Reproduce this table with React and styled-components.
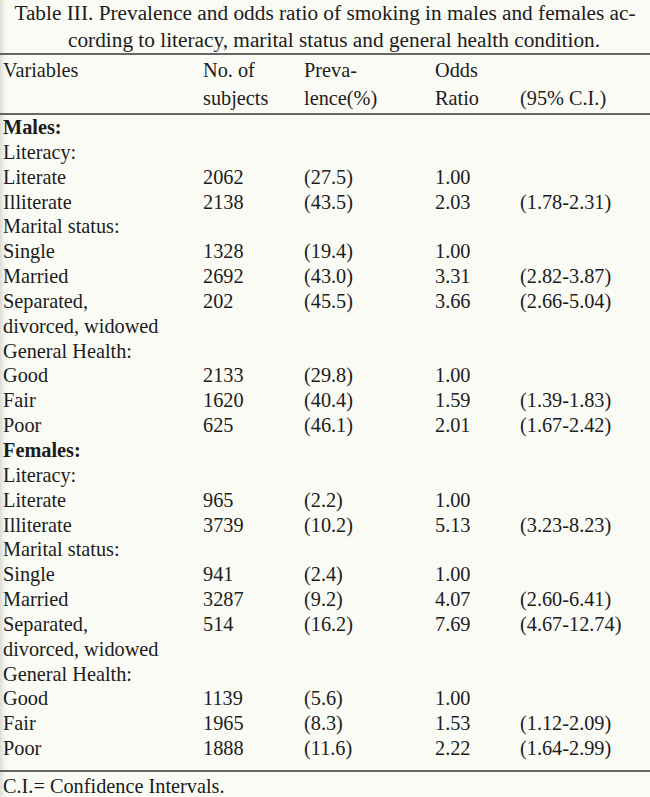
import React from "react";
import styled, { createGlobalStyle } from "styled-components";

const GlobalStyle = createGlobalStyle`
  html, body {
    margin: 0;
    padding: 0;
    background: #fbfbf6;
  }
  body {
    font-family: "Liberation Serif", "Times New Roman", serif;
    color: #1c1c1c;
  }
`;

const Page = styled.div`
  width: 650px;
  height: 797px;
  overflow: hidden;
  background: linear-gradient(to right, #dcdcd6 0px, #f3f3ee 4px, #fbfbf6 8px);
  font-size: 20.3px;
`;

const Caption = styled.div`
  text-align: center;
  font-size: 21.3px;
  line-height: 27px;
  height: 53px;
  white-space: nowrap;
`;

const CaptionLine = styled.span`
  display: block;
  padding-left: ${(p) => p.indent || 0}px;
`;

const Rule = styled.div`
  height: 2px;
  background: #4c4c4c;
  opacity: 0.85;
`;

const Row = styled.div`
  display: grid;
  grid-template-columns: 200px 101px 131px 85px 1fr;
  padding-left: 3px;
  height: ${(p) => p.h || 24.85}px;
  line-height: ${(p) => p.h || 24.85}px;
  font-weight: ${(p) => (p.bold ? 700 : 400)};
  white-space: nowrap;
`;

const Head = styled.div`
  padding: 2px 0 1px;
`;

const Body = styled.div`
  padding-bottom: 9px;
`;

const Cell = styled.span`
  display: block;
`;

const Footer = styled.div`
  padding: 4px 0 0 3px;
  line-height: 20px;
`;

const sections = [
  {
    title: "Males:",
    groups: [
      {
        name: "Literacy:",
        rows: [
          ["Literate", "2062", "(27.5)", "1.00", ""],
          ["Illiterate", "2138", "(43.5)", "2.03", "(1.78-2.31)"],
        ],
      },
      {
        name: "Marital status:",
        rows: [
          ["Single", "1328", "(19.4)", "1.00", ""],
          ["Married", "2692", "(43.0)", "3.31", "(2.82-3.87)"],
          ["Separated,", "202", "(45.5)", "3.66", "(2.66-5.04)"],
          ["divorced, widowed", "", "", "", ""],
        ],
      },
      {
        name: "General Health:",
        rows: [
          ["Good", "2133", "(29.8)", "1.00", ""],
          ["Fair", "1620", "(40.4)", "1.59", "(1.39-1.83)"],
          ["Poor", "625", "(46.1)", "2.01", "(1.67-2.42)"],
        ],
      },
    ],
  },
  {
    title: "Females:",
    groups: [
      {
        name: "Literacy:",
        rows: [
          ["Literate", "965", "(2.2)", "1.00", ""],
          ["Illiterate", "3739", "(10.2)", "5.13", "(3.23-8.23)"],
        ],
      },
      {
        name: "Marital status:",
        rows: [
          ["Single", "941", "(2.4)", "1.00", ""],
          ["Married", "3287", "(9.2)", "4.07", "(2.60-6.41)"],
          ["Separated,", "514", "(16.2)", "7.69", "(4.67-12.74)"],
          ["divorced, widowed", "", "", "", ""],
        ],
      },
      {
        name: "General Health:",
        rows: [
          ["Good", "1139", "(5.6)", "1.00", ""],
          ["Fair", "1965", "(8.3)", "1.53", "(1.12-2.09)"],
          ["Poor", "1888", "(11.6)", "2.22", "(1.64-2.99)"],
        ],
      },
    ],
  },
];

function DataRow({ cells, bold, h }) {
  return (
    <Row bold={bold} h={h}>
      {cells.map((c, i) => (
        <Cell key={i}>{c}</Cell>
      ))}
    </Row>
  );
}

export default function App() {
  return (
    <Page>
      <GlobalStyle />
      <Caption>
        <CaptionLine>
          Table III. Prevalence and odds ratio of smoking in males and females ac-
        </CaptionLine>
        <CaptionLine indent={18}>
          cording to literacy, marital status and general health condition.
        </CaptionLine>
      </Caption>
      <Rule />
      <Head>
        <DataRow h={27} cells={["Variables", "No. of", "Preva-", "Odds", ""]} />
        <DataRow h={28} cells={["", "subjects", "lence(%)", "Ratio", "(95% C.I.)"]} />
      </Head>
      <Rule />
      <Body>
        {sections.map((s) => (
          <React.Fragment key={s.title}>
            <DataRow bold cells={[s.title, "", "", "", ""]} />
            {s.groups.map((g) => (
              <React.Fragment key={g.name}>
                <DataRow cells={[g.name, "", "", "", ""]} />
                {g.rows.map((r, i) => (
                  <DataRow key={i} cells={r} />
                ))}
              </React.Fragment>
            ))}
          </React.Fragment>
        ))}
      </Body>
      <Rule />
      <Footer>C.I.= Confidence Intervals.</Footer>
    </Page>
  );
}
